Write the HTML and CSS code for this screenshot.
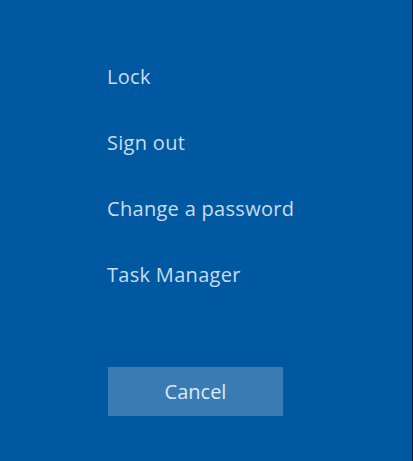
FILE: index.html
```html
<!DOCTYPE html>
<html>
<head>
<meta charset="utf-8">
<link rel="stylesheet" href="styles.css">
</head>
<body>
<div class="screen">
  <nav class="menu">
    <a class="item">Lock</a>
    <a class="item">Sign out</a>
    <a class="item">Change a password</a>
    <a class="item">Task Manager</a>
  </nav>
  <button class="cancel">Cancel</button>
</div>
</body>
</html>
```
FILE: styles.css
```css
html, body {
  margin: 0;
  padding: 0;
  width: 413px;
  height: 461px;
  overflow: hidden;
  background: #0a0f1a;
}
.screen {
  width: 412px;
  height: 461px;
  background: #0058a0;
  box-sizing: border-box;
  padding: 62px 0 0 107px;
  display: flex;
  flex-direction: column;
  font-family: "Open Sans", sans-serif;
  color: #c9ddef;
}
.menu {
  display: flex;
  flex-direction: column;
}
.item {
  font-size: 20px;
  line-height: 30px;
  height: 66px;
  letter-spacing: 0.3px;
  display: block;
}
.cancel {
  margin-top: 41px;
  margin-left: 1px;
  width: 175px;
  height: 49px;
  border: none;
  background: #3a7bb3;
  color: #dfeaf5;
  font-family: "Open Sans", sans-serif;
  font-size: 20px;
  padding: 0;
}
```
